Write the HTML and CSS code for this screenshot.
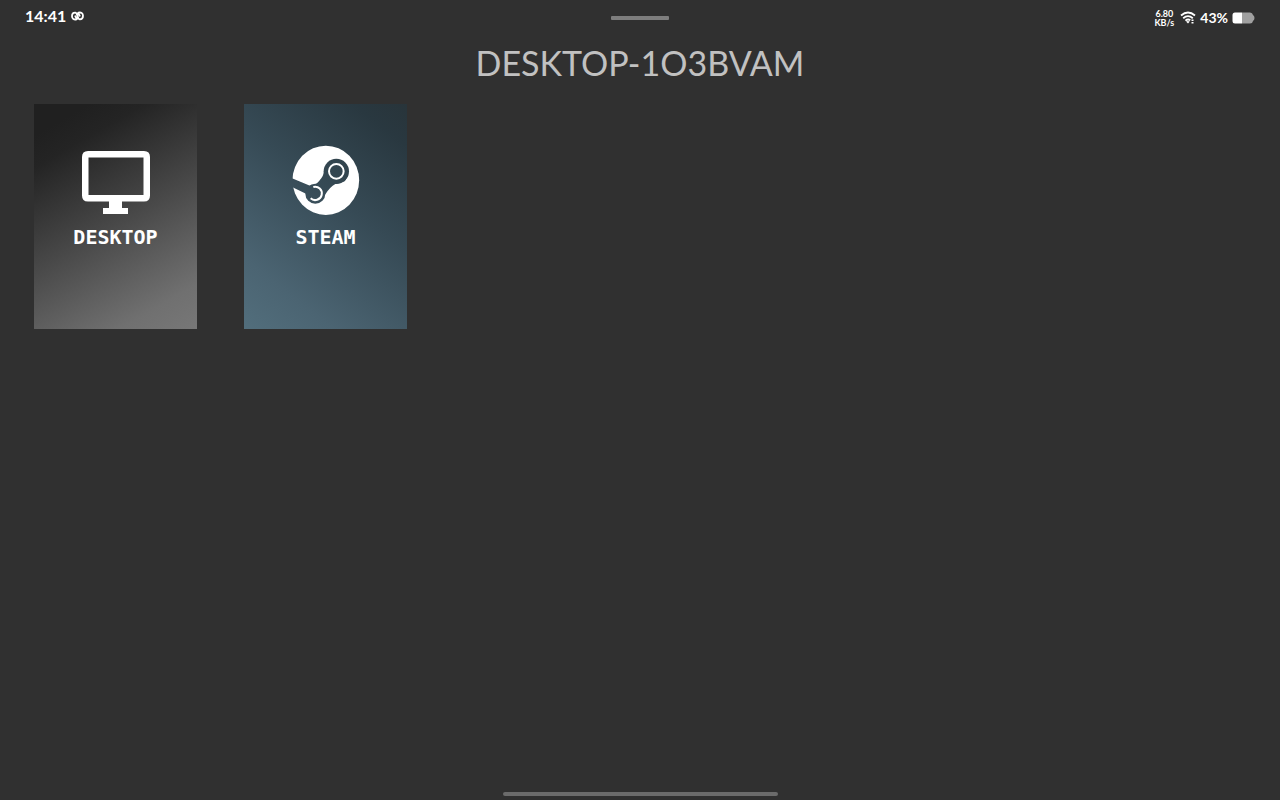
FILE: index.html
```html
<!DOCTYPE html>
<html lang="en">
<head>
<meta charset="utf-8">
<meta name="viewport" content="width=device-width, initial-scale=1">
<title>DESKTOP-1O3BVAM</title>
<link rel="stylesheet" href="styles.css">
</head>
<body>
<header class="status">
  <div class="status-left">
    <time class="clock">14:41</time>
    <svg class="link-icon" viewBox="0 0 13 10" aria-hidden="true"><path d="M5.500 8.300C3 9 1 7.600 1 5.200C1 3 2.500 1.700 4.200 1.700C7 1.700 6 8.300 8.900 8.300C10.700 8.300 12 6.900 12 4.800C12 2.400 10 1 7.500 1.700M4.300 5.200L6 8M8.700 4.800L7 2"/></svg>
  </div>
  <span class="handle"></span>
  <div class="status-right">
    <span class="rate"><span>6.80</span><span>KB/s</span></span>
    <svg class="wifi-icon" viewBox="0 0 16 13" aria-hidden="true"><path d="M1 4.500Q8-1.400 15 4.500M3.200 7.200Q8 3.100 12.800 7.200M5.400 9.600Q8 7.500 10.300 9.300"/><path class="solid" d="M6 10.500Q8 9.400 9.800 10.500L8 12.600ZM11.500 8.500h2v1.600h-2zM11.500 11h2v1.600h-2z"/></svg>
    <span class="percent">43%</span>
    <svg class="battery-icon" viewBox="0 0 23 12" aria-hidden="true"><path class="rest" d="M10 0.500h8q2.500 0 3 2.500q1.500 1 1.500 3t-1.500 3q-.5 2.500-3 2.500h-8z"/><path class="charge" d="M3 .5h7v11h-7Q.5 11.500.5 9V3Q.5.500 3 .500z"/></svg>
  </div>
</header>
<main class="main">
  <h1 class="title">DESKTOP-1O3BVAM</h1>
  <div class="apps">
    <button class="card card-desktop" type="button">
      <svg class="logo" viewBox="0 0 68 70" aria-hidden="true"><path fill-rule="evenodd" d="M6 6h56q6 0 6 6v38.500q0 6-6 6H40V63h6v6H21v-6h6v-6.500H6q-6 0-6-6V12q0-6 6-6zM6.500 12.500v37.500h55V12.500z"/></svg>
      <span class="label">DESKTOP</span>
    </button>
    <button class="card card-steam" type="button">
      <svg class="logo" viewBox="34 27 204 210" aria-hidden="true">
        <defs><mask id="steam-cut" maskUnits="userSpaceOnUse" x="30" y="27" width="210" height="212">
          <rect x="30" y="27" width="210" height="212" fill="#fff"/>
          <path fill="#000" d="M28 124L88 149Q108 146 116 134Q130 118 130 104L203 118L192 136L164 144Q148 152 132 178L94 195L76 173L28 150z"/>
          <circle cx="167" cy="106" r="38" fill="#000"/>
          <circle cx="104" cy="173" r="30" fill="#000"/>
        </mask></defs>
        <ellipse cx="135.500" cy="133" rx="100" ry="104" mask="url(#steam-cut)"/>
        <circle class="ring" cx="167" cy="106" r="22"/>
        <path class="ring" d="M98 153A20 20 0 1 1 90 187"/>
      </svg>
      <span class="label">STEAM</span>
    </button>
  </div>
</main>
<footer class="nav"><span class="nav-bar"></span></footer>
</body>
</html>
```
FILE: styles.css
```css
* { box-sizing: border-box; }
body {
  margin: 0;
  min-height: 100vh;
  display: flex;
  flex-direction: column;
  background: #303030;
  color: #fff;
  font-family: Lato, "Noto Sans", sans-serif;
}
.status {
  display: grid;
  grid-template-columns: 1fr auto 1fr;
  align-items: center;
  height: 36px;
  padding: 0 25px;
}
.status-left, .status-right { display: flex; align-items: center; }
.status-left { gap: 5px; padding-bottom: 4px; }
.status-right { justify-content: flex-end; gap: 4px; padding-bottom: 1px; }
.clock { font-size: 16px; line-height: 20px; font-weight: 700; }
.link-icon { width: 13px; height: 10px; fill: none; stroke: #fff; stroke-width: 1.800; stroke-linecap: round; }
.handle { width: 58px; height: 4px; border-radius: 1px; background: #7d7d7d; }
.rate { display: flex; flex-direction: column; align-items: center; padding-right: 2px; font-size: 9px; line-height: 9px; font-weight: 700; }
.wifi-icon { width: 16px; height: 13px; fill: none; stroke: #fff; stroke-width: 1.800; }
.wifi-icon .solid { fill: #fff; stroke: none; }
.percent { font-size: 14px; line-height: 18px; font-weight: 700; }
.battery-icon { width: 23px; height: 12px; }
.rest { fill: #a0a0a0; }
.charge { fill: #fff; }
.main { flex: 1; }
.title {
  margin: 3px 0 17px;
  font-size: 34px;
  line-height: 48px;
  font-weight: 400;
  text-align: center;
  color: #c1c1c1;
}
.apps { display: flex; flex-wrap: wrap; gap: 47px; padding: 0 34px; }
.card {
  display: flex;
  flex-direction: column;
  align-items: center;
  gap: 8px;
  width: 163px;
  height: 225px;
  padding: 41px 0 0;
  border: 0;
  color: #fff;
  cursor: pointer;
}
.card-desktop { background: linear-gradient(150deg, #202020 10%, #242424 20%, #484848 52%, #707070 86%, #777 100%); }
.card-steam { background: linear-gradient(38deg, #526e7c 0%, #4b6472 20%, #364a55 58%, #293840 88%, #28343a 100%); }
.logo { width: 68px; height: 70px; fill: #fff; }
.ring { fill: none; stroke: #fff; stroke-width: 6; }
.label { font: 700 20px/28px "DejaVu Sans Mono", monospace; }
.nav { display: flex; justify-content: center; padding-bottom: 4px; }
.nav-bar { width: 275px; height: 4px; border-radius: 2px; background: #6b6b6b; }
```
